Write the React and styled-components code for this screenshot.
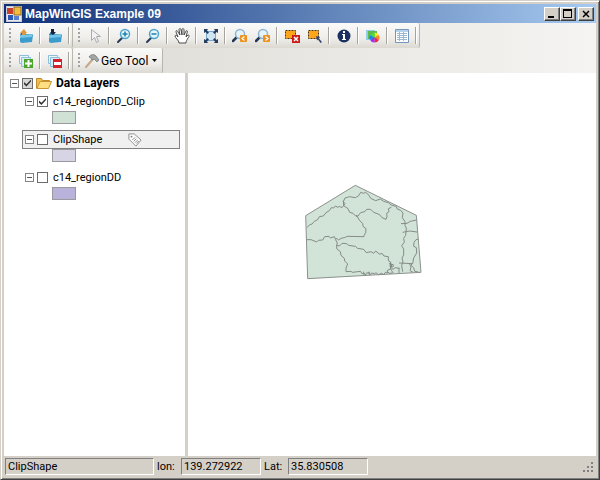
import React, { useState } from 'react';
import styled, { createGlobalStyle } from 'styled-components';

const GlobalStyle = createGlobalStyle`
  * {
    box-sizing: border-box;
  }
  body {
    margin: 0;
    background: #d4d0c8;
    color: #000;
    font-family: Roboto, "Liberation Sans", sans-serif;
    font-size: 11px;
  }
  button {
    font: inherit;
    color: inherit;
    padding: 0;
    border: 0;
    background: none;
  }
`;

const Window = styled.div`
  display: flex;
  flex-direction: column;
  min-height: 100vh;
  padding: 2px;
  background: #d4d0c8;
  border: 1px solid;
  border-color: #d4d0c8 #404040 #404040 #d4d0c8;
  box-shadow: inset 1px 1px #fff, inset -1px -1px #808080;
`;

const TitleBar = styled.header`
  display: flex;
  align-items: center;
  height: 19px;
  margin: 1px 1px 0;
  padding: 0 2px;
  background: linear-gradient(90deg, #0e2f78, #a6caf0);
`;

const Title = styled.h1`
  flex: 1;
  margin: 0 0 0 3px;
  color: #fff;
  font-family: "Liberation Sans", sans-serif;
  font-size: 12px;
  line-height: 18px;
  font-weight: bold;
`;

const WindowButton = styled.button`
  display: grid;
  place-items: center;
  width: 16px;
  height: 14px;
  margin-left: ${props => (props.$apart ? '2px' : '0')};
  background: #d4d0c8;
  border: 1px solid;
  border-color: #fff #404040 #404040 #fff;
  box-shadow: inset -1px -1px #808080;
`;

const ToolArea = styled.div`
  margin: 0 1px;
  background: linear-gradient(90deg, #dbd8d1, #f5f4f2);
`;

const ToolRow = styled.div`
  display: flex;
  height: 25px;
`;

const ToolStrip = styled.div`
  display: flex;
  align-items: center;
  padding-left: 5px;
  background: linear-gradient(#fafaf9, #efeeeb 60%, #dcd9d2);
  border-right: 1px solid #b9b6ae;
  border-radius: 2px;
`;

const Grip = styled.span`
  width: 2px;
  height: 16px;
  margin-right: 3px;
  background: repeating-linear-gradient(#a5a29b 0 2px, transparent 2px 4px);
`;

const ToolButton = styled.button`
  display: flex;
  align-items: center;
  justify-content: center;
  width: 23px;
  height: 22px;
`;

const MenuButton = styled.button`
  display: flex;
  align-items: center;
  gap: 1px;
  height: 22px;
  padding: 0 5px 0 1px;
  font-size: 12px;
  svg + span {
    margin-right: 3px;
  }
`;

const Separator = styled.span`
  width: 6px;
  height: 17px;
  background: linear-gradient(90deg, transparent 2px, #a6a39c 2px 3px, #fff 3px 4px, transparent 4px);
`;

const Body = styled.main`
  display: flex;
  flex: 1;
  margin: 0 1px;
  background: #fff;
`;

const Legend = styled.aside`
  flex: none;
  width: 184px;
  padding: 1px 5px 0 6px;
  border-right: 3px solid #d4d0c8;
`;

const GroupRow = styled.div`
  display: flex;
  align-items: center;
  gap: 3px;
  height: 18px;
  font-size: 12px;
  font-weight: bold;
  label {
    margin-left: 1px;
  }
`;

const LayerRow = styled.div`
  display: flex;
  align-items: center;
  gap: 3px;
  height: 19px;
  margin-left: 12px;
  padding-left: 2px;
  border: 1px solid ${props => (props.$selected ? '#808080' : 'transparent')};
  background: ${props => (props.$selected ? '#f0f0f0' : 'transparent')};
`;

const LayerName = styled.label`
  min-width: 72px;
  margin-left: 2px;
`;

const Swatch = styled.div`
  width: 24px;
  height: 13px;
  margin: 0 0 6px 42px;
  border: 1px solid #9a9a9e;
  background: ${props => props.$color};
`;

const Expander = styled.button`
  width: 9px;
  height: 9px;
  border: 1px solid #848484;
  background: linear-gradient(#555, #555) center / 5px 1px no-repeat #fff;
`;

const CheckBox = styled.input`
  appearance: none;
  display: grid;
  place-items: center;
  width: 11px;
  height: 11px;
  margin: 0;
  border: 1px solid #6c6c6c;
  background: ${props => (props.$shaded ? '#d8d8d8' : '#fff')};
  &:checked::after {
    content: "";
    width: 7px;
    height: 7px;
    background: #333;
    clip-path: polygon(0 35%, 35% 68%, 100% 0, 100% 30%, 35% 100%, 0 68%);
  }
`;

const MapCanvas = styled.section`
  flex: 1;
  min-width: 0;
  padding: 102px 0 0 107px;
  svg {
    display: block;
  }
`;

const StatusBar = styled.footer`
  display: flex;
  align-items: center;
  height: 21px;
  padding: 0 2px;
`;

const StatusField = styled.output`
  width: ${props => (props.$wide ? '149px' : '80px')};
  height: 17px;
  padding-left: 2px;
  line-height: 15px;
  border: 1px solid;
  border-color: #808080 #fff #fff #808080;
`;

const StatusLabel = styled.label`
  width: 27px;
  padding-left: 3px;
`;

const SizeGrip = styled.svg`
  margin: 3px 0 0 auto;
`;

const Icon = ({ children, size = 16 }) => (
  <svg width={size} height={size} viewBox="0 0 16 16" aria-hidden="true">{children}</svg>
);

const AppIcon = () => (
  <Icon>
    <rect x="0.5" y="0.5" width="15" height="15" fill="#e8e8e8" stroke="#c8ccd8" />
    <rect x="1" y="2" width="6" height="6" fill="#c8402c" />
    <rect x="8" y="1" width="7" height="8" fill="#f2bc3c" stroke="#8b6a25" />
    <rect x="2" y="9" width="5" height="5" fill="#2c58b8" />
    <rect x="8" y="10" width="5" height="4" fill="#5a82d2" />
  </Icon>
);

const Folder = ({ up }) => (
  <Icon>
    <path d="M2 7l1-2h4l1 1h6v8H3z" fill="#1d6d9d" />
    <path d="M2 7l12-1 1 1-1 7-10 1-2-1z" fill="#3b9ccd" />
    <path d="M2 7l12-1v3L2 10z" fill="#74c5e8" />
    {up
      ? <path d="M2 5l4-4 3 4H7v2H4V5z" fill="#e0983f" />
      : <path d="M4 1h3v3h2L6 7 3 4h1z" fill="#12253f" />}
  </Icon>
);

const LayerEdit = ({ add }) => (
  <Icon>
    <path d="M1.500 2.500h9v8h-9z" fill="#edf6fb" stroke="#8bbfdb" />
    <path d="M3.500 4.500h9v9h-9z" fill="#d9edf7" stroke="#8bbfdb" />
    {add
      ? <>
          <rect x="6" y="6" width="9" height="9" fill="#4ea52b" />
          <path d="M9.500 7h2v2.500H14v2h-2.500V14h-2v-2.500H7v-2h2.500z" fill="#fff" />
        </>
      : <>
          <rect x="6" y="6" width="9" height="9" fill="#d3222e" />
          <rect x="7" y="9" width="7" height="3" fill="#fff" />
        </>}
  </Icon>
);

const Pointer = () => (
  <Icon>
    <path d="M4.500 1.500v11l3-3 2 5 2-1-2-5h4z" fill="#f2f2f2" stroke="#aaa9ad" />
  </Icon>
);

const Lens = ({ sign }) => (
  <Icon>
    <path d="M6 10l-4 4" stroke="#243a58" strokeWidth="2" strokeLinecap="round" />
    <circle cx="9" cy="6" r="4.500" fill="#e4f5fb" stroke="#4da4cb" strokeWidth="1.500" />
    <path d={sign === 'plus' ? 'M6.500 6h5M9 3.500v5' : 'M6.500 6h5'} stroke="#237da6" strokeWidth="1.500" />
  </Icon>
);

const LensStep = ({ back }) => (
  <Icon>
    <path d="M5 9l-4 4" stroke="#243a58" strokeWidth="2.500" strokeLinecap="round" />
    <circle cx="8" cy="6" r="4.500" fill="#e6f3fa" stroke="#8fb6d3" strokeWidth="1.500" />
    <rect x="8" y="7" width="7" height="7" rx="1" fill="#ef921d" />
    <path d={back ? 'M12.500 8.500l-2.500 2 2.500 2' : 'M10.500 8.500l2.500 2-2.500 2'} fill="none" stroke="#fff" strokeWidth="1.200" />
  </Icon>
);

const Hand = () => (
  <Icon>
    <path
      d="M5 15C5 12 1 10 1 8c0-1 2-1 3 1L2 4c0-2 1-2 2 0l2 3-1-5c0-2 2-2 2 0l1 5V2c0-2 2-2 2 0v5l2-4c1-1 2 0 1 2l-1 4 2-2c2 0 1 2 0 3-1 2-2 3-2 5z"
      fill="#fff" stroke="#3a3a3a" strokeWidth="0.900" strokeLinejoin="round"
    />
  </Icon>
);

const Extents = () => (
  <Icon>
    <rect x="3.500" y="3.500" width="9" height="9" fill="#cfe5f2" stroke="#7ea6c4" />
    <path d="M1 1h4L4 2.500l2 2L4.500 6l-2-2L1 5zM15 1v4l-1.500-1-2 2L10 4.500l2-2L11 1zM1 15v-4l1.500 1 2-2L6 11.500l-2 2L5 15zM15 15h-4l1-1.500-2-2L11.500 10l2 2 1.500-1z" fill="#263f65" />
  </Icon>
);

const SelectArea = ({ clear }) => (
  <Icon>
    <rect x="1.500" y="2.500" width="10" height="8" fill="#ffa51c" stroke="#483512" strokeDasharray="2 1" />
    {clear
      ? <>
          <rect x="8" y="7" width="8" height="8" fill="#ca1c1c" />
          <path d="M10 9l4 4M14 9l-4 4" stroke="#fff" strokeWidth="1.500" />
        </>
      : <path d="M9 8l4 1-1 1.500 3 3.500-1.500 1-2.500-3.500-1 1z" fill="#34466e" />}
  </Icon>
);

const Info = () => (
  <Icon>
    <circle cx="8" cy="8" r="6.500" fill="#1b3060" />
    <path d="M7 3h2v2H7zM6 6h3v5h1v1H6v-1h1V7H6z" fill="#fff" />
  </Icon>
);

const Colors = () => (
  <Icon>
    <path d="M1 2h9v10H1z" fill="#92cdec" />
    <path d="M3 3h9v8H3z" fill="#62b84c" />
    <path d="M9.500 9.500V4.500a5 5 0 0 1 4.400 2.500z" fill="#f7e91e" />
    <path d="M9.500 9.500l4.400-2.500a5 5 0 0 1 0 5z" fill="#ff852b" />
    <path d="M9.500 9.500l4.400 2.500a5 5 0 0 1-4.400 2.500z" fill="#ed2357" />
    <path d="M9.500 9.500v5a5 5 0 0 1-4.400-2.500z" fill="#9a2ff2" />
    <path d="M9.500 9.500l-4.400 2.500a5 5 0 0 1 0-5z" fill="#1984ee" />
    <path d="M9.500 9.500l-4.400-2.500a5 5 0 0 1 4.400-2.500z" fill="#3edf41" />
  </Icon>
);

const TableIcon = () => (
  <Icon>
    <path d="M1.500 1.500h13v13h-13z" fill="#fff" stroke="#7296bd" />
    <path d="M2 2h12v2H2z" fill="#b5d1e8" />
    <path d="M3 5.500h10M3 7.500h10M3 9.500h10M3 11.500h10M5.500 4v9M9.500 4v9" stroke="#9bb8d2" />
  </Icon>
);

const Hammer = () => (
  <Icon>
    <path d="M2 14l7-8" stroke="#c9a98a" strokeWidth="2.200" strokeLinecap="round" />
    <path d="M5 4c2-3 5-3 7-1l3 4-2 2-3-3-2 1-1-2z" fill="#a4a5a5" stroke="#6f7272" strokeWidth="0.700" />
  </Icon>
);

const OpenFolder = () => (
  <Icon>
    <path d="M0.500 13.500v-10h5l1 2h7v2" fill="#f0bd52" stroke="#bd8b27" />
    <path d="M1 13.500l3-7h11.500l-3 7z" fill="#ffdf82" stroke="#c89531" />
  </Icon>
);

const Tag = () => (
  <Icon size={14}>
    <path d="M1 1h6l8 7-6 7-8-8z" fill="#fbfbfb" stroke="#868686" />
    <circle cx="4" cy="4" r="1" fill="#777" />
    <path d="M5 8l3-3M6.500 9.500l3-3M8 11l3-3M9.500 12l3-3" stroke="#888" />
  </Icon>
);

const mainTools = [
  [['Select', <Pointer />]],
  [['Zoom in', <Lens sign="plus" />]],
  [['Zoom out', <Lens sign="minus" />]],
  [['Pan', <Hand />]],
  [['Full extents', <Extents />]],
  [['Previous extent', <LensStep back />], ['Next extent', <LensStep />]],
  [['Clear selection', <SelectArea clear />], ['Select shapes', <SelectArea />]],
  [['Identify', <Info />]],
  [['Color scheme', <Colors />]],
  [['Attribute table', <TableIcon />]],
];

const fileTools = [
  [['Open project', <Folder up />]],
  [['Save project', <Folder />]],
];

const layerTools = [
  [['Add layer', <LayerEdit add />]],
  [['Remove layer', <LayerEdit />]],
];

const layers = [
  { name: 'c14_regionDD_Clip', color: '#d0e2d6', visible: true },
  { name: 'ClipShape', color: '#d7d4e5', visible: false, labeled: true },
  { name: 'c14_regionDD', color: '#b9b3dc', visible: false },
];

function Tools({ groups, label }) {
  return (
    <ToolStrip role="toolbar" aria-label={label}>
      <Grip />
      {groups.map(group => (
        <React.Fragment key={group[0][0]}>
          {group.map(([name, icon]) => (
            <ToolButton key={name} aria-label={name}>{icon}</ToolButton>
          ))}
          <Separator />
        </React.Fragment>
      ))}
    </ToolStrip>
  );
}

function RegionMap() {
  return (
    <svg width="140" height="115" viewBox="0 0 420 345" role="img" aria-label="Clipped regions">
      <path
        d="M181 31L364 121L378 292L38 311L32 122Z"
        fill="#d2e3d8" stroke="#8b918d" strokeWidth="3"
      />
      <g fill="none" stroke="#858c87" strokeWidth="3" strokeLinejoin="bevel">
        <path d="M36 158l7-8 8-3 7-8 10-5 5-9 12-2 8-10 10-6 6-9 7 1 5-6 8 4 5-3 7 4 9-12-5-6 5-11 13-4 18 3 10-6 6-10 9 3 6-3 10 9 5 9 15 7 14-5 10 7 14 4 8 7 15 4 4 8 10 4 7 8-2 14 8 12 0 12 4 7-2 22-6 9 2 12-8 10 6 10 0 18-5 9 3 12-4 10 3 19" />
        <path d="M145 77l1 15 13 9 5 11 10 3 9 9 6-1 8-10 12-3 6-7 12 0 9 9 18 7 7 9 12 5 3-9-1-9 7-5-2-9 9-4" />
        <path d="M184 120l10 17 9 8 1 9 9 7-1 12-5 9 0 3-50-1-9 4-10 2-7 5-5-4-5 1-3-7-12 4-4-5-13 1-6 10-13 1-5 5-17-7-13 0" />
        <path d="M121 193l6 11-2 7 8 2 8-8 14 1 6 5 20 3 7 6 18 3 8 10 14-3 8 5 6-7 11 9 9-1 5 7 13 2 0 12 7 4-2 14 9 8 7-5 12 2" />
        <path d="M125 210l0 11 11 9 2 11 10 9 1 8 9 9-5 12 0 11 15-1 4 3 25-3 3 6 9 1 2 6 3-8 9-1 2 7 5-6 9 2 4-3 7 6 10-4 6 4 5-7 6 2 0-8 10-4 1-12-6-5" />
        <path d="M318 146l18-1 10-6 19-4M323 172l21-4 22 3M312 264l41 2 3-17 9-15-1-16-8-4 1-12 6-8 7-2M344 267l4 9-3 11 9 5M286 262l4 8-4 10 4 7 5 8M312 278l0 17" />
        <path d="M352 265l-4 6 8 7 3 11 11 2M287 268l8 1-1 7-7-2zM278 290l5 5 8-1M206 290v9M222 290v8" />
      </g>
    </svg>
  );
}

export default function App() {
  const [visible, setVisible] = useState(layers.map(layer => layer.visible));
  const [selected, setSelected] = useState(1);

  const toggle = index => {
    setVisible(visible.map((value, i) => (i === index ? !value : value)));
  };

  return (
    <>
      <GlobalStyle />
      <Window>
        <TitleBar>
          <AppIcon />
          <Title>MapWinGIS Example 09</Title>
          <WindowButton aria-label="Minimize">
            <svg width="10" height="9"><path d="M1 7h6v2H1z" /></svg>
          </WindowButton>
          <WindowButton aria-label="Maximize">
            <svg width="10" height="9"><path d="M0 0h9v9H0zM1 2v6h7V2z" fillRule="evenodd" /></svg>
          </WindowButton>
          <WindowButton aria-label="Close" $apart>
            <svg width="8" height="8"><path d="M1 1l6 6M7 1l-6 6" stroke="#000" strokeWidth="1.500" /></svg>
          </WindowButton>
        </TitleBar>

        <ToolArea>
          <ToolRow>
            <Tools groups={fileTools} label="Project" />
            <Tools groups={mainTools} label="Map" />
          </ToolRow>
          <ToolRow>
            <Tools groups={layerTools} label="Layers" />
            <ToolStrip role="toolbar" aria-label="Geo tools">
              <Grip />
              <MenuButton aria-haspopup="menu">
                <Hammer />
                <span>Geo Tool</span>
                <svg width="5" height="3" aria-hidden="true"><path d="M0 0h5L2.500 3z" /></svg>
              </MenuButton>
            </ToolStrip>
          </ToolRow>
        </ToolArea>

        <Body>
          <Legend>
            <GroupRow>
              <Expander aria-label="Collapse Data Layers" />
              <CheckBox id="group" type="checkbox" defaultChecked $shaded />
              <OpenFolder />
              <label htmlFor="group">Data Layers</label>
            </GroupRow>
            {layers.map((layer, index) => (
              <div key={layer.name}>
                <LayerRow $selected={selected === index} onClick={() => setSelected(index)}>
                  <Expander aria-label={`Collapse ${layer.name}`} />
                  <CheckBox
                    id={layer.name}
                    type="checkbox"
                    checked={visible[index]}
                    onChange={() => toggle(index)}
                  />
                  <LayerName htmlFor={layer.name}>{layer.name}</LayerName>
                  {layer.labeled && <Tag />}
                </LayerRow>
                <Swatch $color={layer.color} />
              </div>
            ))}
          </Legend>
          <MapCanvas>
            <RegionMap />
          </MapCanvas>
        </Body>

        <StatusBar>
          <StatusField $wide>{layers[selected].name}</StatusField>
          <StatusLabel htmlFor="lon">lon:</StatusLabel>
          <StatusField id="lon">139.272922</StatusField>
          <StatusLabel htmlFor="lat">Lat:</StatusLabel>
          <StatusField id="lat">35.830508</StatusField>
          <SizeGrip width="12" height="12" aria-hidden="true">
            <path d="M8 0h2v2H8zM4 4h2v2H4zM8 4h2v2H8zM0 8h2v2H0zM4 8h2v2H4zM8 8h2v2H8z" fill="#808080" />
          </SizeGrip>
        </StatusBar>
      </Window>
    </>
  );
}
